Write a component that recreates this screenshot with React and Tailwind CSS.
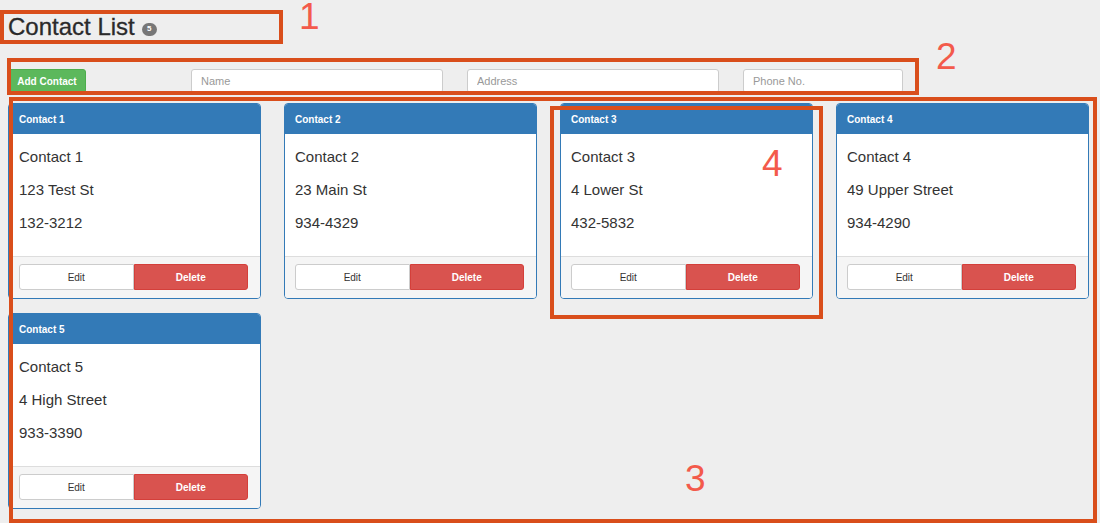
import React from 'react';

const contacts = [
  { id: 1, name: 'Contact 1', address: '123 Test St', phone: '132-3212' },
  { id: 2, name: 'Contact 2', address: '23 Main St', phone: '934-4329' },
  { id: 3, name: 'Contact 3', address: '4 Lower St', phone: '432-5832' },
  { id: 4, name: 'Contact 4', address: '49 Upper Street', phone: '934-4290' },
  { id: 5, name: 'Contact 5', address: '4 High Street', phone: '933-3390' },
];

function ContactCard({ contact }) {
  return (
    <div className="w-[253px] rounded-[4px] border border-[#337ab7] bg-white overflow-hidden">
      {/* Header */}
      <div className="h-[30px] bg-[#337ab7] px-[10px] flex items-center text-[10px] font-bold text-white">
        {contact.name}
      </div>
      {/* Body */}
      <div className="px-[10px] pt-[12px] pb-[11px] text-[15px] text-[#333]">
        <div className="h-[22px] leading-[22px] mb-[11px]">{contact.name}</div>
        <div className="h-[22px] leading-[22px] mb-[11px]">{contact.address}</div>
        <div className="h-[22px] leading-[22px] mb-[11px]">{contact.phone}</div>
      </div>
      {/* Footer */}
      <div className="border-t border-[#ddd] bg-[#f5f5f5] pl-[10px] pr-[12px] pt-[7px] pb-[8px] flex">
        <button className="h-[26px] flex-1 rounded-l-[3px] border border-[#ccc] bg-white text-[10px] text-[#333]">
          Edit
        </button>
        <button className="h-[26px] flex-1 rounded-r-[3px] border border-[#d43f3a] bg-[#d9534f] text-[10px] font-bold text-white">
          Delete
        </button>
      </div>
    </div>
  );
}

function Annotation({ className }) {
  return <div className={`absolute border-[4px] border-[#d94e1b] pointer-events-none ${className}`} />;
}

function Label({ className, children }) {
  return (
    <div className={`absolute text-[37px] leading-[30px] text-[#f35a4b] pointer-events-none ${className}`}>
      {children}
    </div>
  );
}

export default function App() {
  return (
    <div
      className="relative h-[523px] w-[1100px] overflow-hidden bg-[#eeeeee] px-[8px]"
      style={{ fontFamily: '"Liberation Sans", Arial, Helvetica, sans-serif' }}
    >
      {/* Title */}
      <div className="pt-[14px] flex items-center">
        <h1 className="text-[24px] leading-[26px] font-medium text-[#2a2a2a] [-webkit-text-stroke:0.3px_#2a2a2a]">
          Contact List
        </h1>
        <span className="ml-[7px] mt-[4px] flex h-[13px] w-[15px] items-center justify-center rounded-full bg-[#777] text-[8px] font-bold text-white">
          5
        </span>
      </div>

      {/* Toolbar */}
      <div className="mt-[29px] flex items-center h-[24px]">
        <button className="h-[24px] w-[78px] rounded-[3px] border border-[#4cae4c] bg-[#5cb85c] text-[10px] font-bold text-white">
          Add Contact
        </button>
        <input
          placeholder="Name"
          className="ml-[105px] h-[24px] w-[252px] rounded-[3px] border border-[#ccc] bg-white px-[9px] text-[11px] placeholder:text-[#999]"
        />
        <input
          placeholder="Address"
          className="ml-[24px] h-[24px] w-[252px] rounded-[3px] border border-[#ccc] bg-white px-[9px] text-[11px] placeholder:text-[#999]"
        />
        <input
          placeholder="Phone No."
          className="ml-[24px] h-[24px] w-[160px] rounded-[3px] border border-[#ccc] bg-white px-[9px] text-[11px] placeholder:text-[#999]"
        />
      </div>

      {/* Cards */}
      <div className="mt-[10px] grid grid-cols-[repeat(4,253px)] gap-x-[23px] gap-y-[14px]">
        {contacts.map((c) => (
          <ContactCard key={c.id} contact={c} />
        ))}
      </div>

      {/* Annotation overlays */}
      <Annotation className="left-0 top-[10px] w-[283px] h-[34px]" />
      <Label className="left-[299px] top-[2px]">1</Label>
      <Annotation className="left-[7px] top-[58px] w-[912px] h-[37px]" />
      <Label className="left-[936px] top-[42px]">2</Label>
      <Annotation className="left-[9px] top-[97px] w-[1088px] h-[426px]" />
      <Label className="left-[685px] top-[464px]">3</Label>
      <Annotation className="left-[550px] top-[106px] w-[273px] h-[213px]" />
      <Label className="left-[762px] top-[149px]">4</Label>
    </div>
  );
}
